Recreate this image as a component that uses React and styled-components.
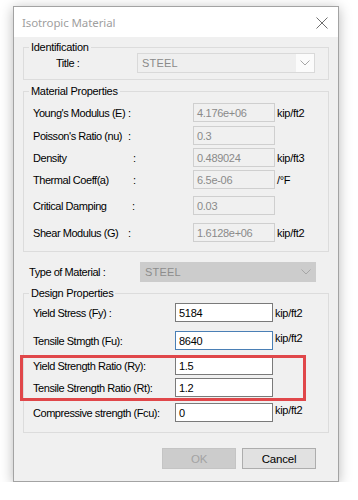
import styled, { createGlobalStyle } from 'styled-components';

const GlobalStyle = createGlobalStyle`
  html, body {
    margin: 0;
    padding: 0;
    background: #ffffff;
  }
  body {
    font-family: "Liberation Sans", Arial, sans-serif;
  }
`;

const Dialog = styled.div`
  box-sizing: border-box;
  width: 326px;
  height: 476px;
  margin: 6px 0 0 13px;
  border: 1px solid #a3a3a3;
  background: #f0f0f0;
  box-shadow: 0 2px 12px rgba(0, 0, 0, 0.28);
  display: flex;
  flex-direction: column;
`;

const TitleBar = styled.div`
  height: 30px;
  background: #ffffff;
  display: flex;
  align-items: center;
  justify-content: space-between;
  padding: 0 8px 0 8px;
`;

const TitleText = styled.span`
  font-family: "Noto Sans", "Open Sans", sans-serif;
  font-size: 11.5px;
  color: #a0a0a0;
  letter-spacing: -0.1px;
  margin-top: 1px;
`;

const CloseButton = styled.span`
  display: flex;
  width: 12px;
  height: 12px;
  margin-right: 2px;
  margin-top: 1px;
`;

const Body = styled.div`
  flex: 1;
  padding: 4px 9px 0 9px;
  display: flex;
  flex-direction: column;
`;

const Group = styled.fieldset`
  margin: ${(p) => p.$top || 0}px 0 0 0;
  padding: 0 9px ${(p) => p.$bottom || 0}px 9px;
  border: 1px solid #dcdcdc;
  border-radius: 0;
  min-width: 0;
`;

const Legend = styled.legend`
  font-size: 11px;
  line-height: 12px;
  letter-spacing: -0.3px;
  color: #000;
  padding: 0 2px;
  margin-left: -4px;
`;

const Row = styled.div`
  display: flex;
  align-items: ${(p) => p.$align || 'center'};
  height: ${(p) => p.$h || 19}px;
  margin-top: ${(p) => p.$top || 0}px;
  padding-left: ${(p) => p.$indent || 0}px;
`;

const Label = styled.span`
  display: flex;
  align-self: center;
  width: ${(p) => p.$w}px;
  flex-shrink: 0;
  font-size: 11px;
  letter-spacing: -0.45px;
  color: #000;
  white-space: nowrap;
`;

const LabelName = styled.span`
  width: ${(p) => p.$w}px;
  flex-shrink: 0;
`;

const Field = styled.div`
  box-sizing: border-box;
  width: ${(p) => p.$w}px;
  height: 100%;
  flex-shrink: 0;
  display: flex;
  align-items: center;
  padding-left: 3px;
  font-size: 11px;
  letter-spacing: -0.3px;
  background: ${(p) => (p.$disabled ? '#f0f0f0' : '#ffffff')};
  color: ${(p) => (p.$disabled ? '#8a8a8a' : '#000')};
  border: 1px solid
    ${(p) => (p.$focus ? '#4a7fb5' : p.$disabled ? '#cfcfcf' : '#7a7a7a')};
`;

const Unit = styled.span`
  margin-left: 2px;
  margin-top: ${(p) => (p.$raised ? 1 : 0)}px;
  font-size: 11px;
  letter-spacing: -0.3px;
  color: #000;
  white-space: nowrap;
`;

const Combo = styled.div`
  box-sizing: border-box;
  width: ${(p) => p.$w}px;
  height: 20px;
  display: flex;
  align-items: stretch;
  border: 1px solid ${(p) => (p.$filled ? '#cccccc' : '#d9d9d9')};
  background: ${(p) => (p.$filled ? '#cccccc' : '#efefef')};
  font-size: 11px;
  letter-spacing: 0.2px;
  color: ${(p) => (p.$filled ? '#8d8d8d' : '#8a8a8a')};
`;

const ComboText = styled.span`
  flex: 1;
  display: flex;
  align-items: center;
  padding-left: 4px;
`;

const ComboArrow = styled.span`
  width: 18px;
  display: flex;
  align-items: center;
  justify-content: center;
  background: ${(p) => (p.$filled ? '#cccccc' : '#fbfbfb')};
`;

const Marked = styled.div`
  position: relative;
  &::after {
    content: '';
    position: absolute;
    top: -1px;
    bottom: -4px;
    left: -13px;
    right: 13px;
    border: 3px solid #e0474a;
    pointer-events: none;
  }
`;

const Buttons = styled.div`
  display: flex;
  justify-content: flex-end;
  gap: 6px;
  margin-top: 15px;
  padding-right: 13px;
`;

const Button = styled.div`
  box-sizing: border-box;
  width: 74px;
  height: 21px;
  display: flex;
  align-items: center;
  justify-content: center;
  font-size: 11.5px;
  letter-spacing: -0.2px;
  background: ${(p) => (p.$disabled ? '#cccccc' : '#e1e1e1')};
  border: 1px solid ${(p) => (p.$disabled ? '#c4c4c4' : '#adadad')};
  color: ${(p) => (p.$disabled ? '#a3a3a3' : '#000')};
`;

const Chevron = () => (
  <svg width="10" height="6" viewBox="0 0 10 6">
    <polyline points="0.5,0.5 5,5 9.5,0.5" fill="none" stroke="#a6a6a6" strokeWidth="1" />
  </svg>
);

const CloseIcon = () => (
  <svg width="12" height="12" viewBox="0 0 12 12">
    <path d="M0.5 0.5 L11.5 11.5 M11.5 0.5 L0.5 11.5" stroke="#6f6f6f" strokeWidth="1" fill="none" />
  </svg>
);

// colon column differs per row in the original dialog
const materialProps = [
  { name: "Young's Modulus (E)", colon: 95, value: '4.176e+06', unit: 'kip/ft2', top: 6 },
  { name: "Poisson's Ratio (nu)", colon: 95, value: '0.3', unit: '', top: 4 },
  { name: 'Density', colon: 100, value: '0.489024', unit: 'kip/ft3', top: 3 },
  { name: 'Thermal Coeff(a)', colon: 100, value: '6.5e-06', unit: '/°F', top: 3 },
  { name: 'Critical Damping', colon: 99, value: '0.03', unit: '', top: 7 },
  { name: 'Shear Modulus (G)', colon: 95, value: '1.6128e+06', unit: 'kip/ft2', top: 8 },
];

const DesignRow = ({ label, value, unit, top, focus, raised }) => (
  <Row $top={top} $align={raised ? 'flex-start' : 'center'}>
    <Label $w={142}>{label}</Label>
    <Field $w={98} $focus={focus}>{value}</Field>
    {unit && <Unit $raised={raised}>{unit}</Unit>}
  </Row>
);

export default function App() {
  return (
    <>
      <GlobalStyle />
      <Dialog>
        <TitleBar>
          <TitleText>Isotropic Material</TitleText>
          <CloseButton>
            <CloseIcon />
          </CloseButton>
        </TitleBar>
        <Body>
          <Group $bottom={6}>
            <Legend>Identification</Legend>
            <Row $h={20} $indent={23}>
              <Label $w={81}>Title :</Label>
              <Combo $w={178}>
                <ComboText>STEEL</ComboText>
                <ComboArrow>
                  <Chevron />
                </ComboArrow>
              </Combo>
            </Row>
          </Group>

          <Group $top={5} $bottom={9}>
            <Legend>Material Properties</Legend>
            {materialProps.map((p) => (
              <Row key={p.name} $top={p.top}>
                <Label $w={160}>
                  <LabelName $w={p.colon}>{p.name}</LabelName>:
                </Label>
                <Field $w={82} $disabled>
                  {p.value}
                </Field>
                {p.unit && <Unit>{p.unit}</Unit>}
              </Row>
            ))}
          </Group>

          <Row $h={20} $top={10} $indent={6}>
            <Label $w={111}>Type of Material :</Label>
            <Combo $w={176} $filled>
              <ComboText>STEEL</ComboText>
              <ComboArrow $filled>
                <Chevron />
              </ComboArrow>
            </Combo>
          </Row>

          <Group $top={5} $bottom={10}>
            <Legend>Design Properties</Legend>
            <DesignRow label="Yield Stress (Fy) :" value="5184" unit="kip/ft2" top={4} />
            <DesignRow label="Tensile Stmgth (Fu):" value="8640" unit="kip/ft2" top={9} focus raised />
            <Marked>
              <DesignRow label="Yield Strength Ratio (Ry):" value="1.5" top={6} />
              <DesignRow label="Tensile Strength Ratio (Rt):" value="1.2" top={3} />
            </Marked>
            <DesignRow label="Compressive strength (Fcu):" value="0" unit="kip/ft2" top={6} raised />
          </Group>

          <Buttons>
            <Button $disabled>OK</Button>
            <Button>Cancel</Button>
          </Buttons>
        </Body>
      </Dialog>
    </>
  );
}
